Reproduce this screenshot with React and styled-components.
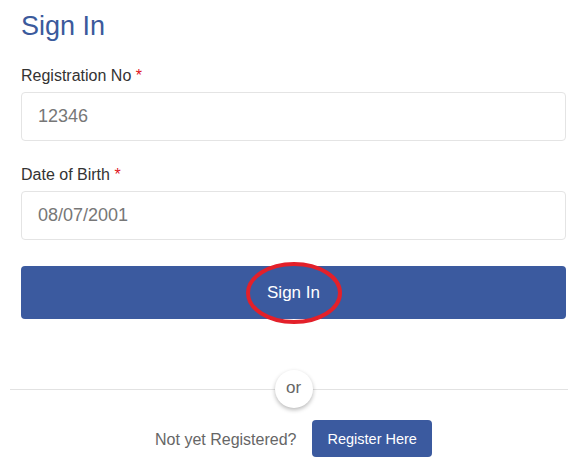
import React from "react";
import styled, { createGlobalStyle } from "styled-components";

const GlobalStyle = createGlobalStyle`
  html, body {
    margin: 0;
    padding: 0;
    background: #ffffff;
    font-family: "Liberation Sans", Arial, sans-serif;
  }
  * { box-sizing: border-box; }
`;

const Page = styled.div`
  width: 568px;
  height: 460px;
  overflow: hidden;
  padding: 11px 2px 0 21px;
  display: flex;
  flex-direction: column;
`;

const Title = styled.h1`
  margin: 0;
  font-size: 27px;
  line-height: 31px;
  font-weight: 400;
  color: #3b5a9c;
`;

const Form = styled.form`
  margin-top: 24px;
  display: flex;
  flex-direction: column;
  gap: 24px;
`;

const Field = styled.div`
  display: flex;
  flex-direction: column;
  gap: 6px;
`;

const Label = styled.label`
  font-size: 16px;
  line-height: 20px;
  color: #333333;
`;

const Required = styled.span`
  color: #e0141e;
`;

const Input = styled.input`
  height: 49px;
  width: 100%;
  border: 1px solid #e4e4e4;
  border-radius: 4px;
  padding: 0 16px;
  font-family: "Liberation Sans", Arial, sans-serif;
  font-size: 18px;
  color: #777777;
  background: #ffffff;
  outline: none;
`;

const SubmitButton = styled.button`
  position: relative;
  margin-top: 2px;
  height: 53px;
  width: 100%;
  border: none;
  border-radius: 4px;
  background: #3b5a9f;
  color: #ffffff;
  font-family: "Liberation Sans", Arial, sans-serif;
  font-size: 17px;
  cursor: pointer;
`;

const Highlight = styled.svg`
  position: absolute;
  left: 50%;
  top: 50%;
  width: 100px;
  height: 66px;
  transform: translate(-50%, -50%);
  pointer-events: none;
  overflow: visible;
`;

const Divider = styled.div`
  position: relative;
  margin-top: 51px;
  display: flex;
  justify-content: center;
  &::before {
    content: "";
    position: absolute;
    left: -11px;
    right: -2px;
    top: 50%;
    height: 1px;
    background: #e2e2e2;
  }
`;

const OrBadge = styled.span`
  position: relative;
  width: 38px;
  height: 38px;
  border-radius: 50%;
  background: #ffffff;
  box-shadow: 0 2px 4px rgba(0, 0, 0, 0.28);
  display: flex;
  align-items: center;
  justify-content: center;
  font-size: 17px;
  color: #666666;
  padding-bottom: 2px;
`;

const RegisterRow = styled.div`
  margin-top: 12px;
  display: flex;
  align-items: center;
  justify-content: center;
  gap: 16px;
`;

const RegisterText = styled.span`
  font-size: 16px;
  color: #666666;
  padding-top: 2px;
`;

const RegisterButton = styled.button`
  height: 37px;
  padding: 0 15px;
  border: none;
  border-radius: 4px;
  background: #3b5a9f;
  color: #ffffff;
  font-family: "Liberation Sans", Arial, sans-serif;
  font-size: 14.5px;
  cursor: pointer;
`;

export default function App() {
  return (
    <>
      <GlobalStyle />
      <Page>
        <Title>Sign In</Title>
        <Form onSubmit={(e) => e.preventDefault()}>
          <Field>
            <Label htmlFor="reg">
              Registration No <Required>*</Required>
            </Label>
            <Input id="reg" value="12346" readOnly />
          </Field>
          <Field>
            <Label htmlFor="dob">
              Date of Birth <Required>*</Required>
            </Label>
            <Input id="dob" value="08/07/2001" readOnly />
          </Field>
          <SubmitButton type="submit">
            Sign In
            <Highlight viewBox="0 0 100 66">
              <ellipse
                cx="50"
                cy="33"
                rx="46"
                ry="29"
                fill="none"
                stroke="#e3202a"
                strokeWidth="4"
              />
            </Highlight>
          </SubmitButton>
        </Form>
        <Divider>
          <OrBadge>or</OrBadge>
        </Divider>
        <RegisterRow>
          <RegisterText>Not yet Registered?</RegisterText>
          <RegisterButton type="button">Register Here</RegisterButton>
        </RegisterRow>
      </Page>
    </>
  );
}
